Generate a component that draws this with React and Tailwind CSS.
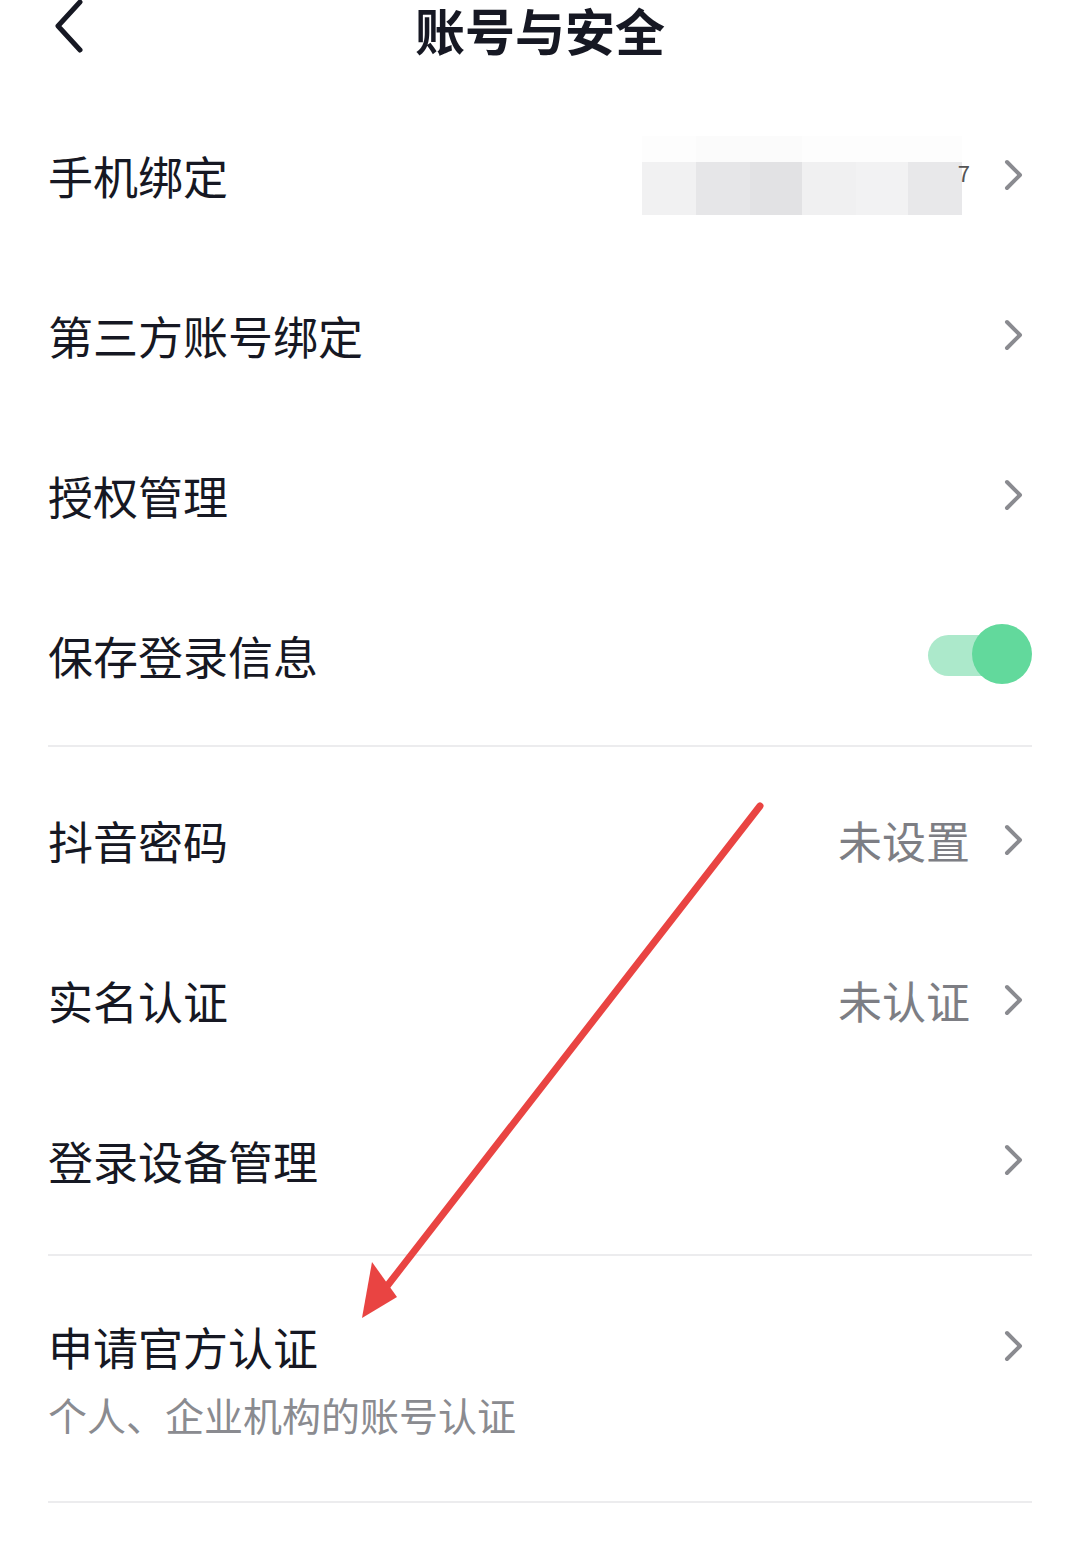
import React, { useState } from 'react';

const Chevron = () => (
  <svg width="22" height="34" viewBox="0 0 22 34" className="shrink-0 mr-[8px]">
    <path d="M5 4 L18 17 L5 30" fill="none" stroke="#8a8b90" strokeWidth="4" strokeLinecap="round" strokeLinejoin="round" />
  </svg>
);

const Row = ({ label, value, children }) => (
  <div className="h-[160px] flex items-center justify-between">
    <span className="text-[45px] text-[#161823] leading-none">{label}</span>
    <div className="flex items-center">
      {value && <span className="text-[44px] text-[#7d7e84] leading-none mr-[32px]">{value}</span>}
      {children}
    </div>
  </div>
);

const BlurredPhone = () => (
  <div className="flex flex-col mr-[40px]">
    <div className="flex h-[26px]">
      <div className="w-[54px] bg-[#fdfdfd]" />
      <div className="w-[106px] bg-[#fbfbfb]" />
      <div className="w-[160px] bg-[#fdfdfd]" />
    </div>
    <div className="flex h-[53px] relative">
      <div className="w-[54px] bg-[#f1f1f2]" />
      <div className="w-[54px] bg-[#e6e6e8]" />
      <div className="w-[52px] bg-[#e2e2e4]" />
      <div className="w-[54px] bg-[#f0f0f1]" />
      <div className="w-[52px] bg-[#f2f2f3]" />
      <div className="w-[54px] bg-[#e8e8ea]" />
      <span className="absolute right-[-8px] top-[-6px] text-[22px] text-[#555]">7</span>
    </div>
  </div>
);

const Toggle = ({ on, onClick }) => (
  <button onClick={onClick} className="relative w-[108px] h-[62px] flex items-center">
    <div className="ml-[4px] w-[96px] h-[41px] rounded-full bg-[#ace9cb]" />
    <div className={`absolute top-0 w-[60px] h-[60px] rounded-full bg-[#62d99c] ${on ? 'right-0' : 'left-0'}`} />
  </button>
);

export default function App() {
  const [keep, setKeep] = useState(true);

  return (
    <div
      className="relative w-[1080px] h-[1554px] bg-white overflow-hidden"
      style={{ fontFamily: '"Noto Sans CJK SC", "Noto Sans", sans-serif' }}
    >
      <div className="h-[95px] relative flex justify-center">
        <svg width="40" height="56" viewBox="0 0 40 56" className="absolute left-[50px] top-[-2px]">
          <path d="M30 4 L8 28 L30 52" fill="none" stroke="#161823" strokeWidth="5" strokeLinecap="round" strokeLinejoin="round" />
        </svg>
        <h1 className="pt-[2px] text-[50px] font-bold text-[#161823] leading-[54px]">账号与安全</h1>
      </div>

      <div className="px-[48px]">
        <Row label="手机绑定">
          <BlurredPhone />
          <Chevron />
        </Row>
        <Row label="第三方账号绑定">
          <Chevron />
        </Row>
        <Row label="授权管理">
          <Chevron />
        </Row>
        <Row label="保存登录信息">
          <Toggle on={keep} onClick={() => setKeep(!keep)} />
        </Row>

        <div className="mt-[10px] border-t-2 border-[#ececee]" />
        <div className="h-[13px]" />

        <Row label="抖音密码" value="未设置">
          <Chevron />
        </Row>
        <Row label="实名认证" value="未认证">
          <Chevron />
        </Row>
        <Row label="登录设备管理">
          <Chevron />
        </Row>

        <div className="mt-[14px] border-t-2 border-[#ececee]" />

        <div className="h-[245px] flex flex-col justify-center">
          <div className="flex items-center justify-between">
            <span className="text-[45px] text-[#161823] leading-none">申请官方认证</span>
            <Chevron />
          </div>
          <span className="mt-[26px] text-[39px] text-[#8a8b90] leading-none">个人、企业机构的账号认证</span>
        </div>

        <div className="border-t-2 border-[#ececee]" />
      </div>

      <svg className="absolute left-0 top-0 pointer-events-none" width="1080" height="1554">
        <line x1="760" y1="806" x2="384" y2="1290" stroke="#e94442" strokeWidth="7" strokeLinecap="round" />
        <polygon points="362,1318 372,1262 397,1297" fill="#e94442" />
      </svg>
    </div>
  );
}
